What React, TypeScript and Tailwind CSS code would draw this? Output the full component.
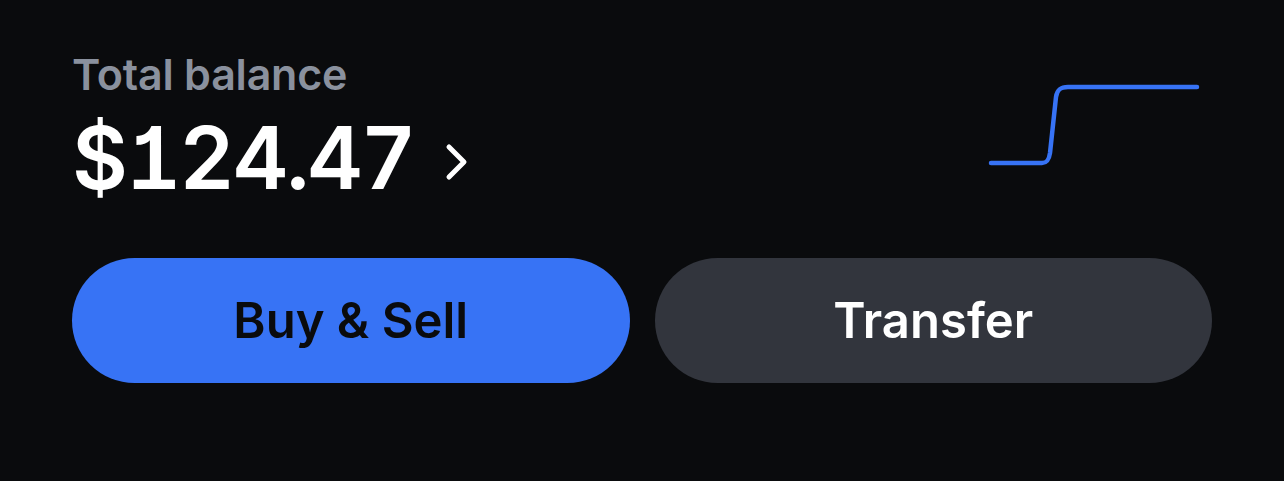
export default function App() {
  return (
    <main
      className="w-[1284px] h-[481px] bg-[#0a0b0d] px-[72px] pt-[48px]"
      style={{ fontFamily: 'Inter, "Noto Sans", sans-serif' }}
    >
      {/* Balance row */}
      <div className="flex items-start justify-between">
        <div className="flex flex-col">
          <p className="text-[43px] leading-[52px] font-semibold text-[#8a919e] tracking-[-0.005em]">
            Total balance
          </p>
          <div className="mt-[10px] flex items-center gap-[30px]">
            <p className="text-[86px] leading-[96px] font-semibold text-white tracking-[-0.025em] [font-feature-settings:'tnum','cv01']">
              $124.47
            </p>
            <svg width="28" height="38" viewBox="0 0 28 38" fill="none" className="mt-[8px]">
              <path
                d="M5 4 L20 19 L5 34"
                stroke="#ffffff"
                strokeWidth="5"
                strokeLinecap="round"
                strokeLinejoin="round"
              />
            </svg>
          </div>
        </div>

        {/* Sparkline */}
        <svg width="216" height="84" viewBox="0 0 216 84" fill="none" className="mt-[35px] mr-[11px]">
          <path
            d="M6 80 H57 C62 80 64 77 65 70 L71 14 C72 7 75 4 83 4 H212"
            stroke="#3773f5"
            strokeWidth="4.5"
            strokeLinecap="round"
            strokeLinejoin="round"
          />
        </svg>
      </div>

      {/* Actions */}
      <div className="mt-[52px] grid grid-cols-2 gap-[25px]">
        <button className="h-[125px] rounded-full bg-[#3773f5] text-[#0a0b0d] text-[49px] font-semibold">
          Buy &amp; Sell
        </button>
        <button className="h-[125px] rounded-full bg-[#32353d] text-white text-[49px] font-semibold">
          Transfer
        </button>
      </div>
    </main>
  )
}
